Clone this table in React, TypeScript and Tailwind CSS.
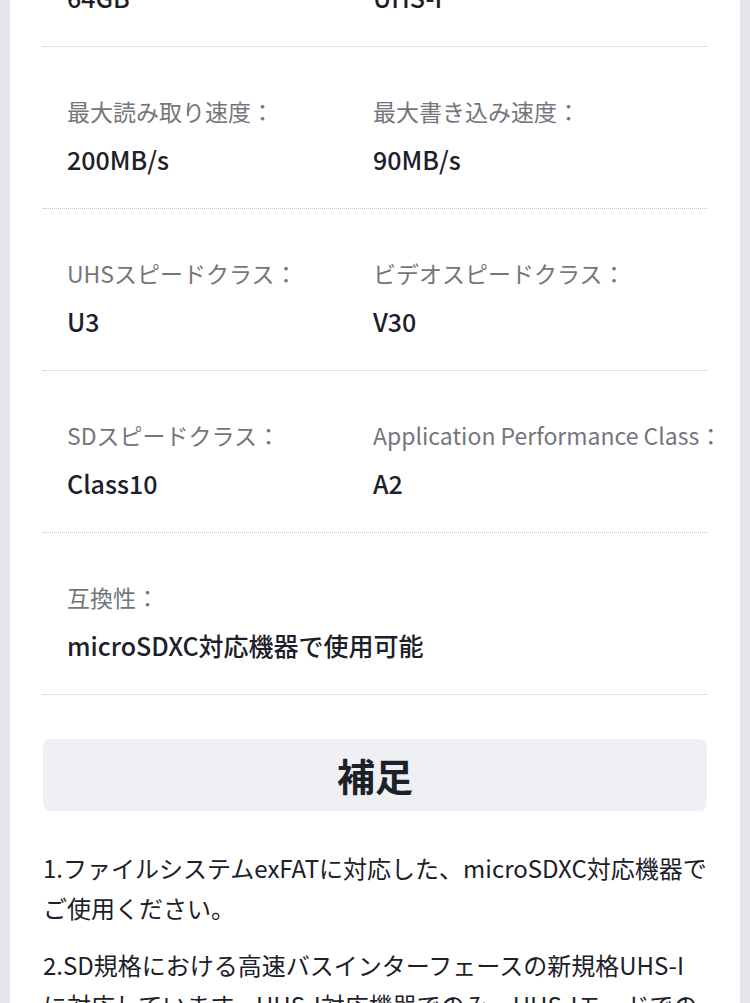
import React from 'react';

const specs = [
  [
    { label: '容量：', value: '64GB' },
    { label: 'バス規格：', value: 'UHS-I' },
  ],
  [
    { label: '最大読み取り速度：', value: '200MB/s' },
    { label: '最大書き込み速度：', value: '90MB/s' },
  ],
  [
    { label: 'UHSスピードクラス：', value: 'U3' },
    { label: 'ビデオスピードクラス：', value: 'V30' },
  ],
  [
    { label: 'SDスピードクラス：', value: 'Class10' },
    { label: 'Application Performance Class：', value: 'A2' },
  ],
  [{ label: '互換性：', value: 'microSDXC対応機器で使用可能' }],
];

const notes = [
  '1.ファイルシステムexFATに対応した、microSDXC対応機器でご使用ください。',
  '2.SD規格における高速バスインターフェースの新規格UHS-Iに対応しています。UHS-I対応機器でのみ、UHS-Iモードでの高速転送が可能です。',
];

const App: React.FC = () => {
  return (
    <div
      className="min-h-screen bg-[#e4e5ea] px-[10px] overflow-hidden"
      style={{ fontFamily: '"Noto Sans CJK JP", "Noto Sans", sans-serif' }}
    >
      <div className="bg-white min-h-screen px-[33px] pb-10">
        {/* spec table */}
        <div className="-mt-[115px]">
          {specs.map((row, i) => (
            <div
              key={i}
              className="grid grid-cols-[306px_1fr] px-6 pt-[48px] pb-[33px] border-b border-dotted border-[#c4c4c8]"
            >
              {row.map((cell) => (
                <div key={cell.label} className="flex flex-col gap-4 whitespace-nowrap">
                  <span className="text-[23px] leading-8 text-[#73767d]">{cell.label}</span>
                  <span className="text-[25px] leading-8 font-medium text-[#1c2029]">{cell.value}</span>
                </div>
              ))}
            </div>
          ))}
        </div>

        {/* 補足 */}
        <div className="mt-[44px] h-[72px] rounded-lg bg-[#eff0f3] flex items-center justify-center">
          <h2 className="text-[38px] font-bold text-[#1c2029] leading-none">補足</h2>
        </div>

        <div className="mt-[37px] flex flex-col gap-[17px]">
          {notes.map((n) => (
            <p key={n} className="text-[24px] leading-10 text-[#1c2029]">
              {n}
            </p>
          ))}
        </div>
      </div>
    </div>
  );
};

export default App;
